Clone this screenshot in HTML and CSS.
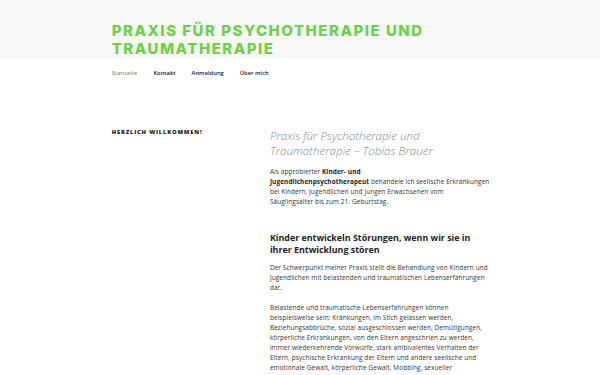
FILE: index.html
```
<!DOCTYPE html>
<html lang="de">
<head>
<meta charset="utf-8">
<title>Praxis für Psychotherapie und Traumatherapie</title>
<link rel="stylesheet" href="styles.css">
</head>
<body>
<header class="site-header">
  <div class="wrap">
    <p class="site-title">Praxis für Psychotherapie und Traumatherapie</p>
  </div>
</header>
<nav class="main-nav">
  <div class="wrap">
    <ul class="menu">
      <li class="current">Startseite</li>
      <li>Kontakt</li>
      <li>Anmeldung</li>
      <li>Über mich</li>
    </ul>
  </div>
</nav>
<main class="site-main">
  <div class="wrap columns">
    <header class="entry-header">
      <h1 class="entry-title">Herzlich Willkommen!</h1>
    </header>
    <div class="entry-content">
      <h2 class="lead">Praxis für Psychotherapie und Traumatherapie – Tobias Brauer</h2>
      <p>Als approbierter <strong>Kinder- und<br>Jugendlichenpsychotherapeut</strong> behandele ich seelische Erkrankungen<br>bei Kindern, Jugendlichen und jungen Erwachsenen vom<br>Säuglingsalter bis zum 21. Geburtstag.</p>
      <h3>Kinder entwickeln Störungen, wenn wir sie in ihrer Entwicklung stören</h3>
      <p>Der Schwerpunkt meiner Praxis stellt die Behandlung von Kindern und<br>Jugendlichen mit belastenden und traumatischen Lebenserfahrungen<br>dar.</p>
      <p>Belastende und traumatische Lebenserfahrungen können<br>beispielsweise sein: Kränkungen, im Stich gelassen werden,<br>Beziehungsabbrüche, sozial ausgeschlossen werden, Demütigungen,<br>körperliche Erkrankungen, von den Eltern angeschrien zu werden,<br>immer wiederkehrende Vorwürfe, stark ambivalentes Verhalten der<br>Eltern, psychische Erkrankung der Eltern und andere seelische und<br>emotionale Gewalt, körperliche Gewalt, Mobbing, sexueller<br>Missbrauch, Trennung der Eltern, Verlust eines Elternteils und<br>vieles mehr.</p>
    </div>
  </div>
</main>
</body>
</html>
```
FILE: styles.css
```
*, *::before, *::after {
  box-sizing: border-box;
}
html, body {
  margin: 0;
  padding: 0;
  background: #fff;
}
body {
  font-family: "Open Sans", "Liberation Sans", sans-serif;
  color: #333;
  font-size: 6.25px;
  line-height: 10px;
}
.wrap {
  max-width: 416.67px;
  margin: 0 auto;
  padding: 0 20px;
}
.site-header {
  background: #f8f8f8;
  padding: 21.5px 0 0.5px;
}
.site-title {
  margin: 0;
  font-family: "Inter", "Liberation Sans", sans-serif;
  font-weight: 800;
  font-size: 15px;
  line-height: 18.3px;
  letter-spacing: 1.5px;
  text-transform: uppercase;
  color: #6dd04a;
  max-width: 340px;
}
.main-nav {
  padding: 10px 0;
}
.menu {
  list-style: none;
  margin: 0;
  padding: 0;
  display: flex;
  gap: 16px;
  font-weight: 600;
  font-size: 5.8px;
  line-height: 8px;
  color: #222;
}
.menu .current {
  color: #767676;
  font-weight: 400;
}
.site-main {
  padding-top: 41px;
}
.columns {
  display: flex;
  justify-content: space-between;
}
.entry-header {
  width: 36%;
}
.entry-title {
  margin: 0;
  padding: 0;
  font-size: 5.8px;
  line-height: 8px;
  font-weight: 800;
  letter-spacing: 0.14em;
  text-transform: uppercase;
  color: #222;
}
.entry-content {
  width: 58%;
  font-size: 6.45px;
  letter-spacing: 0.1px;
}
.lead {
  margin: 0 0 9px;
  font-size: 11.6px;
  line-height: 15px;
  font-weight: 300;
  font-style: italic;
  letter-spacing: 0;
  color: #8a8a8a;
}
.entry-content p {
  margin: 0 0 10px;
  white-space: nowrap;
}
.entry-content strong {
  font-weight: 700;
  color: #222;
}
.entry-content h3 {
  margin: 25px 0 6px;
  font-size: 8.9px;
  line-height: 12.5px;
  font-weight: 700;
  letter-spacing: 0;
  color: #222;
}
```
